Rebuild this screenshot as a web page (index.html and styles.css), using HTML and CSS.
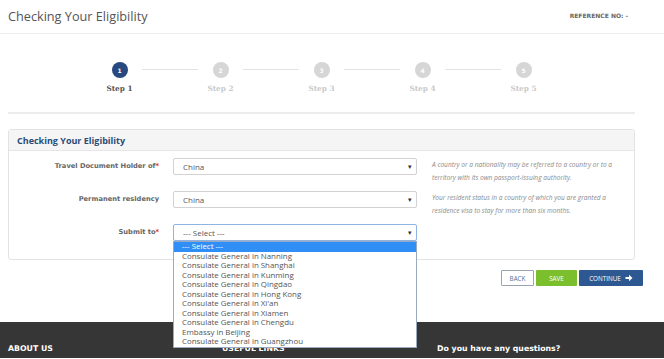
FILE: index.html
```html
<!DOCTYPE html>
<html lang="en">
<head>
  <meta charset="UTF-8" />
  <title>Checking Your Eligibility</title>
  <link rel="stylesheet" href="styles.css">
</head>
<body>
  <div class="topbar">
    <h1 class="page-title">Checking Your Eligibility</h1>
    <span class="ref-no">REFERENCE NO: -</span>
  </div>

  <div class="main">
    <!-- Barra de pasos -->
    <ul class="steps">
      <li class="step active"><span class="dot">1</span><span class="step-label">Step 1</span></li>
      <li class="step"><span class="dot">2</span><span class="step-label">Step 2</span></li>
      <li class="step"><span class="dot">3</span><span class="step-label">Step 3</span></li>
      <li class="step"><span class="dot">4</span><span class="step-label">Step 4</span></li>
      <li class="step"><span class="dot">5</span><span class="step-label">Step 5</span></li>
    </ul>

    <div class="panel">
      <div class="panel-head">Checking Your Eligibility</div>
      <div class="panel-body">
        <div class="row">
          <label class="row-label">Travel Document Holder of<span class="req">*</span></label>
          <div class="select"><span>China</span><span class="caret">&#9662;</span></div>
          <p class="help">A country or a nationality may be referred to a country or to a territory with its own passport-issuing authority.</p>
        </div>
        <div class="row">
          <label class="row-label">Permanent residency</label>
          <div class="select"><span>China</span><span class="caret">&#9662;</span></div>
          <p class="help">Your resident status in a country of which you are granted a residence visa to stay for more than six months.</p>
        </div>
        <div class="row">
          <label class="row-label">Submit to<span class="req">*</span></label>
          <div class="select focus"><span>--- Select ---</span><span class="caret">&#9662;</span>
            <!-- lista abierta -->
            <ul class="options">
              <li class="selected">--- Select ---</li>
              <li>Consulate General in Nanning</li>
              <li>Consulate General in Shanghai</li>
              <li>Consulate General in Kunming</li>
              <li>Consulate General in Qingdao</li>
              <li>Consulate General in Hong Kong</li>
              <li>Consulate General in Xi'an</li>
              <li>Consulate General in Xiamen</li>
              <li>Consulate General in Chengdu</li>
              <li>Embassy in Beijing</li>
              <li>Consulate General in Guangzhou</li>
            </ul>
          </div>
          <p class="help"></p>
        </div>
      </div>
    </div>

    <div class="actions">
      <button class="btn btn-back">BACK</button>
      <button class="btn btn-save">SAVE</button>
      <button class="btn btn-next">CONTINUE
        <svg width="8" height="8" viewBox="0 0 16 16"><path d="M1 6h7V1.5L15 8l-7 6.5V10H1z" fill="#fff"/></svg>
      </button>
    </div>
  </div>

  <footer class="footer">
    <span class="foot-col">ABOUT US</span>
    <span class="foot-col links">USEFUL LINKS</span>
    <span class="foot-col questions">Do you have any questions?</span>
  </footer>
</body>
</html>
```

FILE: styles.css
```css
* {
  box-sizing: border-box;
  margin: 0;
  padding: 0;
}
body {
  background: #fff;
  font-family: 'Open Sans', sans-serif;
  color: #555;
}
.topbar {
  height: 34px;
  border-bottom: 1px solid #eee;
  display: flex;
  align-items: center;
  justify-content: space-between;
  padding: 0 36px 2px 8px;
}
.page-title {
  font-size: 12.7px;
  font-weight: normal;
  color: #555;
}
.ref-no {
  font-family: 'DejaVu Sans', sans-serif;
  font-size: 6px;
  font-weight: bold;
  color: #666;
}
.main {
  padding: 0 29px 0 8px;
}
.steps {
  list-style: none;
  display: flex;
  justify-content: center;
  padding: 28px 0 18px;
  border-bottom: 2px solid #ececec;
}
.step {
  width: 101px;
  display: flex;
  flex-direction: column;
  align-items: center;
  position: relative;
}
.step + .step::before {
  content: "";
  position: absolute;
  top: 7px;
  left: -28px;
  width: 56px;
  height: 1px;
  background: #e3e3e3;
}
.dot {
  width: 16px;
  height: 16px;
  border-radius: 50%;
  background: #d6d6d6;
  color: #fff;
  font-family: 'DejaVu Sans', sans-serif;
  font-size: 6px;
  font-weight: bold;
  display: flex;
  align-items: center;
  justify-content: center;
}
.step-label {
  margin-top: 6px;
  font-family: 'DejaVu Serif', serif;
  font-size: 7.3px;
  font-weight: bold;
  line-height: 10px;
  color: #c9c9c9;
}
.step.active .dot {
  background: #27497f;
}
.step.active .step-label {
  color: #555;
}
.panel {
  margin-top: 15px;
  border: 1px solid #e3e3e3;
  border-radius: 3px;
}
.panel-head {
  height: 21px;
  background: #f5f5f5;
  border-bottom: 1px solid #e6e6e6;
  padding-left: 8px;
  display: flex;
  align-items: center;
  font-size: 9px;
  font-weight: bold;
  color: #2b4c78;
}
.panel-body {
  padding: 7px 0 18px;
  display: flex;
  flex-direction: column;
  gap: 16px;
}
.row {
  display: flex;
  align-items: flex-start;
  height: 17px;
}
.row-label {
  width: 150px;
  text-align: right;
  font-family: 'DejaVu Sans', sans-serif;
  font-size: 6.7px;
  font-weight: bold;
  color: #666;
  line-height: 17px;
}
.req {
  color: #d9261c;
}
.select {
  position: relative;
  margin-left: 14px;
  width: 244px;
  height: 17px;
  border: 1px solid #d2d2d2;
  border-radius: 2px;
  display: flex;
  align-items: center;
  justify-content: space-between;
  padding: 0 4px 0 9px;
  font-size: 8px;
  color: #555;
}
.select.focus {
  border-color: #8fb4e3;
}
.caret {
  font-size: 7px;
  color: #333;
}
.help {
  margin-left: 15px;
  width: 196px;
  font-size: 6.6px;
  font-style: italic;
  line-height: 13px;
  color: #8a8a8a;
  margin-top: 0;
}
.options {
  list-style: none;
  position: absolute;
  top: 16px;
  left: -1px;
  width: 244px;
  background: #fff;
  border: 1px solid #9aa9bf;
  z-index: 5;
}
.options li {
  height: 9.5px;
  line-height: 9.5px;
  padding-left: 8px;
  font-size: 7.9px;
  color: #555;
}
.options li.selected {
  background: #2f8ff7;
  color: #fff;
}
.actions {
  display: flex;
  justify-content: flex-end;
  gap: 2px;
  margin: 10px -8px 0 0;
}
.btn {
  height: 16px;
  border: none;
  border-radius: 1px;
  font-family: 'Open Sans', sans-serif;
  font-size: 6.3px;
  display: flex;
  align-items: center;
  justify-content: center;
  gap: 4px;
  color: #fff;
}
.btn-back {
  width: 33px;
  background: #fff;
  border: 1px solid #9aa3ad;
  color: #4f6f98;
}
.btn-save {
  width: 41px;
  background: #7cbf2c;
}
.btn-next {
  width: 64px;
  background: #2d5891;
}
.footer {
  margin-top: 36px;
  height: 36px;
  background: #363636;
  display: flex;
  align-items: center;
  padding: 16px 0 0 8px;
  color: #fff;
  font-family: 'DejaVu Sans', sans-serif;
  font-size: 7.8px;
  font-weight: bold;
}
.foot-col {
  width: 214px;
}
.links {
  width: 215px;
}
```
